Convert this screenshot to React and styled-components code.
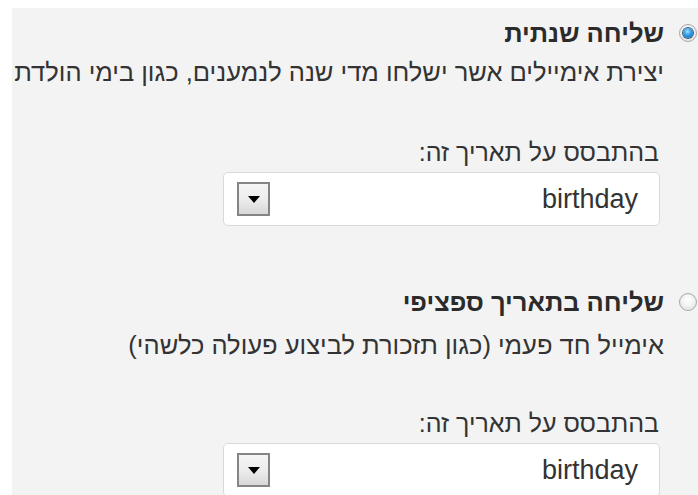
import React from "react";
import styled, { createGlobalStyle } from "styled-components";

const GlobalStyle = createGlobalStyle`
  html, body {
    margin: 0;
    padding: 0;
    background: #ffffff;
  }
  body {
    font-family: "Liberation Sans", Arial, "DejaVu Sans", sans-serif;
  }
`;

const Page = styled.div`
  padding: 8px 0 0 12px;
  height: 495px;
  box-sizing: border-box;
  overflow: hidden;
`;

const Panel = styled.div`
  background: #f3f3f3;
  direction: rtl;
  height: 100%;
  padding-top: 12px;
  box-sizing: border-box;
`;

const Option = styled.section`
  display: grid;
  grid-template-columns: 34px 1fr;
  margin-bottom: ${(p) => p.$gap || 0}px;
`;

const RadioCell = styled.div`
  display: flex;
  justify-content: flex-start;
  padding: 4px 1px 0 0;
`;

const Radio = styled.span`
  display: block;
  width: 18px;
  height: 18px;
  border-radius: 50%;
  box-sizing: border-box;
  border: 1px solid #a9a9a9;
  background: radial-gradient(circle at 50% 35%, #ffffff 0%, #f2f2f2 50%, #d2d2d2 100%);
  box-shadow: inset 0 0 0 1px #ececec;
  position: relative;

  ${(p) =>
    p.$checked &&
    `
    &::after {
      content: "";
      position: absolute;
      left: 3px;
      top: 3px;
      width: 10px;
      height: 10px;
      border-radius: 50%;
      background: radial-gradient(circle at 45% 35%, #a8e0ff 0%, #2c9be6 45%, #0b5ca6 100%);
      box-shadow: 0 0 0 1px #3f5d78;
    }
  `}
`;

const Content = styled.div`
  color: #333333;
`;

const Title = styled.div`
  font-weight: bold;
  font-size: 25.5px;
  line-height: 26px;
  color: #2b2b2b;
`;

const Description = styled.div`
  font-size: 25.5px;
  line-height: 26px;
  margin-top: ${(p) => p.$top}px;
  white-space: nowrap;
`;

const FieldLabel = styled.div`
  font-size: 25px;
  line-height: 26px;
  margin-top: ${(p) => p.$top}px;
  margin-right: 5px;
`;

const SelectBox = styled.div`
  margin-top: 7px;
  margin-right: 4px;
  width: 437px;
  height: 54px;
  box-sizing: border-box;
  background: #ffffff;
  border: 1px solid #dadada;
  border-radius: 5px;
  display: flex;
  align-items: center;
  justify-content: space-between;
  padding: 0 21px 0 13px;
`;

const SelectValue = styled.span`
  font-size: 27px;
  color: #333333;
  direction: ltr;
`;

const DropButton = styled.span`
  width: 33px;
  height: 34px;
  box-sizing: border-box;
  border: 2px solid #858585;
  background: linear-gradient(#f5f5f5 0%, #ededed 50%, #d8d8d8 100%);
  display: flex;
  align-items: center;
  justify-content: center;
`;

function Arrow() {
  return (
    <svg width="12" height="7" viewBox="0 0 12 7">
      <polygon points="0,0 12,0 6,7" fill="#000" />
    </svg>
  );
}

function DateSelect({ value }) {
  return (
    <SelectBox>
      <SelectValue>{value}</SelectValue>
      <DropButton>
        <Arrow />
      </DropButton>
    </SelectBox>
  );
}

function ScheduleOption({ checked, title, description, descTop, labelTop, gap }) {
  return (
    <Option $gap={gap}>
      <RadioCell>
        <Radio $checked={checked} />
      </RadioCell>
      <Content>
        <Title>{title}</Title>
        <Description $top={descTop}>{description}</Description>
        <FieldLabel $top={labelTop}>בהתבסס על תאריך זה:</FieldLabel>
        <DateSelect value="birthday" />
      </Content>
    </Option>
  );
}

export default function App() {
  return (
    <>
      <GlobalStyle />
      <Page>
        <Panel>
          <ScheduleOption
            checked
            title="שליחה שנתית"
            description="יצירת אימיילים אשר ישלחו מדי שנה לנמענים, כגון בימי הולדת"
            descTop={13}
            labelTop={54}
            gap={63}
          />
          <ScheduleOption
            title="שליחה בתאריך ספציפי"
            description="אימייל חד פעמי (כגון תזכורת לביצוע פעולה כלשהי)"
            descTop={17}
            labelTop={52}
          />
        </Panel>
      </Page>
    </>
  );
}
